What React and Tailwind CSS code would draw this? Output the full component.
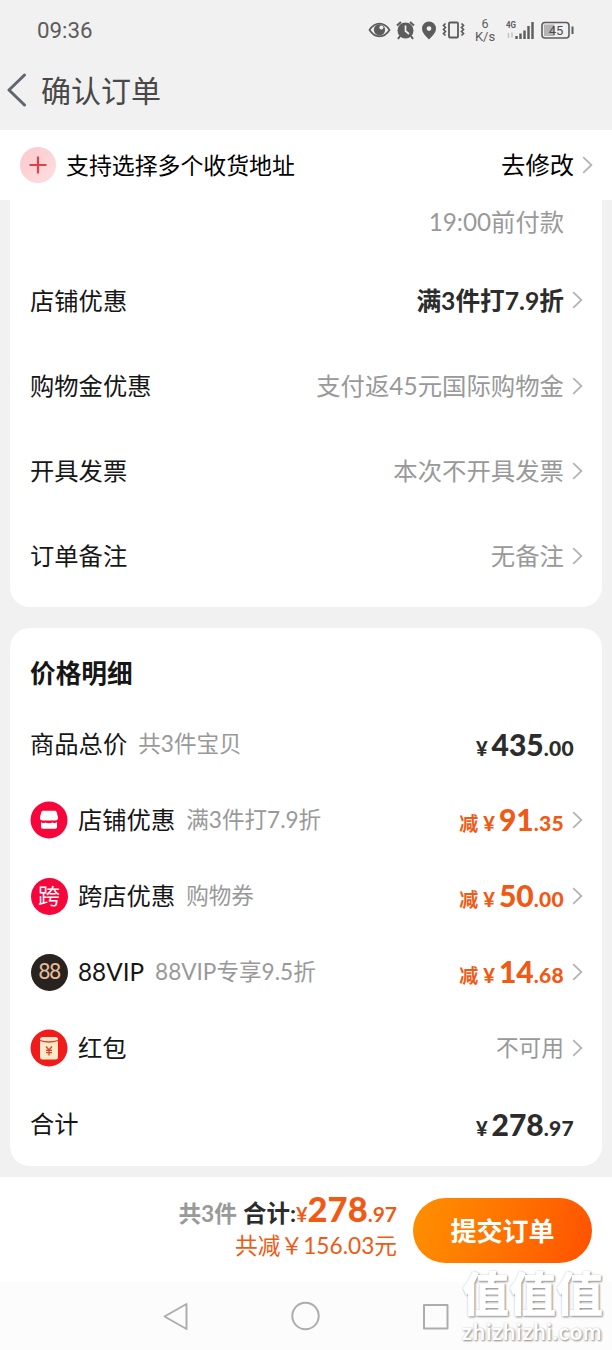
import React from 'react';
import clsx from 'clsx';

const Chevron = ({ className }) => (
    <svg viewBox="0 0 11 18" className={clsx('w-[11px] h-[18px] shrink-0', className)} fill="none" stroke="#b4b4b4" strokeWidth="1.8">
        <path d="M1.2 1.2 9.4 9l-8.2 7.8" />
    </svg>
);

const StatusIcons = () => (
    <svg viewBox="0 0 210 32" className="w-[210px] h-8" fill="none" stroke="#5c5c5c">
        {/* eye */}
        <path d="M1.5 16C7 7.5 16 7.5 21.5 16C16 24.5 7 24.5 1.5 16Z" strokeWidth="1.7" />
        <circle cx="11.5" cy="15.8" r="5.6" fill="#5c5c5c" stroke="none" />
        <circle cx="13.4" cy="13.6" r="2" fill="#f1f1f1" stroke="none" />
        {/* alarm */}
        <circle cx="37.5" cy="16.5" r="8" fill="#5c5c5c" stroke="none" />
        <path d="M29 11.5l4-3.5M46 11.5 42 8M32 22l-2 3M43 22l2 3" strokeWidth="2" />
        <path d="M37.5 11.5v5.5l3.5 3" stroke="#f1f1f1" strokeWidth="1.7" />
        {/* location */}
        <path fillRule="evenodd" fill="#5c5c5c" stroke="none" d="M61 7.5a7 7 0 0 1 7 7C68 19 64 22 61 25.5C58 22 54 19 54 14.5A7 7 0 0 1 61 7.5Zm0 4.7a2.4 2.4 0 1 0 0 4.8a2.4 2.4 0 0 0 0-4.8Z" />
        {/* vibrate */}
        <rect x="81" y="8.5" width="9" height="15" rx="1" strokeWidth="1.8" />
        <path d="M77.5 9.5l-2 2 2 2-2 2 2 2-2 2 2 2M93.5 9.5l2 2-2 2 2 2-2 2 2 2-2 2" strokeWidth="1.7" />
        {/* network speed */}
        <g fill="#5c5c5c" stroke="none" className="font-['Roboto',sans-serif]">
            <text x="117" y="14" fontSize="12.5" textAnchor="middle">6</text>
            <text x="117" y="26.5" fontSize="13" textAnchor="middle">K/s</text>
            <text x="138" y="14" fontSize="8.5" fontWeight="700" textLength="10" lengthAdjust="spacingAndGlyphs">4G</text>
        </g>
        <path d="M140.5 19v5M144 18.5v5" stroke="#c4c4c4" strokeWidth="1.5" />
        <path d="M148.5 25v-3M152.5 25v-5.5M156.5 25v-8.5M160.5 25V12M164.5 25V8" strokeWidth="2.4" />
        {/* battery */}
        <rect x="174" y="8.5" width="27" height="15.5" rx="3" strokeWidth="1.6" />
        <rect x="176" y="10.5" width="10.5" height="11.5" fill="#b5b5b5" stroke="none" />
        <path d="M204.5 12.5v7.5" strokeWidth="2" />
        <text x="188" y="20.8" fontSize="13" textAnchor="middle" fill="#4d4d4d" stroke="none" className="font-['Roboto',sans-serif]">45</text>
    </svg>
);

const ShopIcon = () => (
    <svg viewBox="0 0 38 38" className="w-[38px] h-[38px] shrink-0">
        <circle cx="19" cy="19" r="18.5" fill="#f7063c" />
        <path d="M13.5 9.8h11c1.4 0 2 .6 2.3 1.7l1.2 4.7c.3 2.4-1.2 3.6-3 3.3H13c-1.8.3-3.300-.9-3-3.3l1.2-4.7c.3-1.1.9-1.7 2.3-1.700Z" fill="#fff" />
        <path d="M11 20.8c1.6 1.3 3.2 1.3 4.6.2 1.6 1.4 5 1.4 6.7 0 1.4 1.1 3 1.1 4.7-.2v5c0 1.3-.7 2-1.9 2H12.900c-1.2 0-1.9-.7-1.9-2Z" fill="#fff" />
        <path d="M11 20.3c1.6 1.3 3.2 1.3 4.6.2 1.6 1.4 5 1.4 6.7 0 1.4 1.1 3 1.1 4.7-.2" stroke="#f7063c" strokeWidth="1.3" fill="none" />
    </svg>
);

const CrossIcon = () => (
    <span className="w-[37px] h-[37px] mx-[0.5px] shrink-0 rounded-full bg-[#f7063c] text-white text-[22px] flex items-center justify-center leading-none">
        <span>跨</span>
    </span>
);

const VipIcon = () => (
    <span className="w-[37px] h-[37px] mx-[0.5px] shrink-0 rounded-full bg-[#292320] text-[#e3bd98] text-[22px] flex items-center justify-center leading-none font-['Roboto',sans-serif]">
        <span className="tracking-[-1.5px]">88</span>
    </span>
);

const RedPacketIcon = () => (
    <svg viewBox="0 0 38 38" className="w-[38px] h-[38px] shrink-0">
        <circle cx="19" cy="19" r="18.5" fill="#f11b1b" />
        <rect x="10" y="8" width="18" height="22.5" rx="2.5" fill="#ffe9c6" />
        <path d="M10 11.5q9 3 18 0" stroke="#e3402c" strokeWidth="1.3" fill="none" />
        <path d="M16 17.5l3 3.5 3-3.5M19 21v5.5M16 21.3h6M16 23.7h6" stroke="#d9402c" strokeWidth="1.3" fill="none" />
    </svg>
);

const OptionRow = ({ label, value, strong }) => (
    <div className="h-[85px] flex items-center justify-between pl-5 pr-[19px]">
        <span className="text-[24.3px] text-[#161616] pt-px">{label}</span>
        <div className="flex items-center">
            <span className={clsx('pt-px', strong ? 'text-[24.7px] font-bold text-[#2c2c2c]' : 'text-[24.4px] text-[#999]')}>{value}</span>
            <Chevron className="ml-2" />
        </div>
    </div>
);

const Amount = ({ prefix, value }) => {
    const [whole, cents] = value.split('.');
    return (
        <span className={clsx('flex items-baseline font-bold leading-9 pt-[3px]', prefix ? 'text-[#f05a14]' : 'text-[#2c2c2c]')}>
            {prefix && <span className="text-[19px] mr-[5px]">{prefix}</span>}
            <span className="text-[20px] font-black mr-1">¥</span>
            <span className="text-[30px] font-black">{whole}</span>
            <span className="text-[21px] font-black tracking-[0.3px]">.{cents}</span>
        </span>
    );
};

const PriceRow = ({ icon, label, note, children, arrow }) => (
    <div className="h-[76px] flex items-center justify-between pl-5 pr-[19px]">
        <div className="flex items-center">
            {icon && <span className="mr-2.5 flex">{icon}</span>}
            <span className="text-[24.3px] text-[#161616] pt-px">{label}</span>
            {note && <span className="text-[22.6px] text-[#999] ml-[11px] pt-px">{note}</span>}
        </div>
        <div className={clsx('flex items-center', !arrow && 'pr-[9px]')}>
            {children}
            {arrow && <Chevron className="ml-2" />}
        </div>
    </div>
);

export default function App() {
    return (
        <div className="relative w-[612px] h-[1350px] overflow-hidden bg-[#f1f1f1] flex flex-col whitespace-nowrap leading-none font-['Lato','Noto_Sans_CJK_SC',sans-serif]">
            <header className="h-[130px] shrink-0">
                <div className="h-[60px] pl-[37px] pr-[34px] flex items-center justify-between">
                    <span className="text-[22.3px] text-[#5c5c5c] font-['Roboto',sans-serif]">09:36</span>
                    <StatusIcons />
                </div>
                <div className="h-[60px] pl-[7px] flex items-center">
                    <svg viewBox="0 0 20 34" className="w-5 h-[34px]" fill="none" stroke="#5f6670" strokeWidth="3" strokeLinecap="round" strokeLinejoin="round">
                        <path d="M17.5 2 2 17l15.5 15" />
                    </svg>
                    <h1 className="ml-3.5 text-[30px] text-[#484848]">确认订单</h1>
                </div>
            </header>

            <div className="h-[70px] shrink-0 bg-white flex items-center justify-between pl-5 pr-[19px]">
                <div className="flex items-center">
                    <svg viewBox="0 0 36 36" className="w-9 h-9">
                        <defs>
                            <linearGradient id="plusBg" x1="0" y1="0" x2="1" y2="1">
                                <stop offset="0" stopColor="#fbc9cc" />
                                <stop offset="1" stopColor="#fddfe0" />
                            </linearGradient>
                        </defs>
                        <circle cx="18" cy="18" r="18" fill="url(#plusBg)" />
                        <path d="M18 9.5v17M9.5 18h17" stroke="#e0404a" strokeWidth="2.2" />
                    </svg>
                    <span className="ml-2.5 text-[22.9px] text-black">支持选择多个收货地址</span>
                </div>
                <div className="flex items-center">
                    <span className="text-[24.3px] text-black">去修改</span>
                    <Chevron className="ml-2" />
                </div>
            </div>

            <section className="h-[407px] shrink-0 mx-2.5 bg-white rounded-b-[20px]">
                <div className="h-[58px] pt-[10px] pr-[38px] text-right text-[24.3px] text-[#999]">19:00前付款</div>
                <OptionRow label="店铺优惠" value="满3件打7.9折" strong />
                <OptionRow label="购物金优惠" value="支付返45元国际购物金" />
                <OptionRow label="开具发票" value="本次不开具发票" />
                <OptionRow label="订单备注" value="无备注" />
            </section>

            <section className="h-[538px] shrink-0 mx-2.5 mt-[21px] bg-white rounded-[20px]">
                <h2 className="h-[78px] pt-[33px] pl-5 text-[25.7px] font-bold text-[#161616]">价格明细</h2>
                <PriceRow label="商品总价" note="共3件宝贝">
                    <Amount value="435.00" />
                </PriceRow>
                <PriceRow icon={<ShopIcon />} label="店铺优惠" note="满3件打7.9折" arrow>
                    <Amount prefix="减" value="91.35" />
                </PriceRow>
                <PriceRow icon={<CrossIcon />} label="跨店优惠" note="购物券" arrow>
                    <Amount prefix="减" value="50.00" />
                </PriceRow>
                <PriceRow icon={<VipIcon />} label="88VIP" note="88VIP专享9.5折" arrow>
                    <Amount prefix="减" value="14.68" />
                </PriceRow>
                <PriceRow icon={<RedPacketIcon />} label="红包" arrow>
                    <span className="text-[22.7px] text-[#999] pt-px">不可用</span>
                </PriceRow>
                <PriceRow label="合计">
                    <Amount value="278.97" />
                </PriceRow>
            </section>

            <footer className="mt-[11px] h-[105px] shrink-0 bg-white flex items-start justify-end pr-5">
                <div className="pt-[11px] mr-4 flex flex-col items-end">
                    <div className="flex items-baseline font-bold h-[47px] leading-[42px]">
                        <span className="text-[22.7px] text-[#999] mr-1.5">共3件</span>
                        <span className="text-[23.5px] text-[#2c2c2c]">合计:</span>
                        <span className="text-[20px] text-[#f05a14]">¥</span>
                        <span className="text-[34.5px] font-black text-[#f05a14]">278</span>
                        <span className="text-[21px] text-[#f05a14]">.97</span>
                    </div>
                    <div className="text-[22.7px] text-[#f05a14]">共减￥156.03元</div>
                </div>
                <button className="mt-[21px] w-[179px] h-[65px] rounded-full bg-linear-105 from-[#ff9000] to-[#ff5000] text-white text-[26px] font-bold leading-none">
                    提交订单
                </button>
            </footer>

            <nav className="h-[68px] shrink-0 bg-[#fcfcfc] flex items-center">
                <svg viewBox="0 0 612 68" className="w-[612px] h-[68px]" fill="none" stroke="#adadad" strokeWidth="2" strokeLinejoin="round">
                    <path d="M186.5 22v25L164.5 34.5Z" />
                    <circle cx="305.5" cy="34" r="13.2" />
                    <rect x="424" y="23" width="23.5" height="23.5" />
                </svg>
            </nav>

            <div className="absolute left-[462px] top-[1268px] text-white [text-shadow:1px_1px_2px_#8a8a8a,0_0_2px_#d5d5d5]">
                <div className="text-[47px] font-black leading-[50px]">值值值</div>
                <div className="mt-0.5 text-[22px] font-bold leading-[24px] tracking-[0.7px]">zhizhizhi.com</div>
            </div>
        </div>
    );
}
